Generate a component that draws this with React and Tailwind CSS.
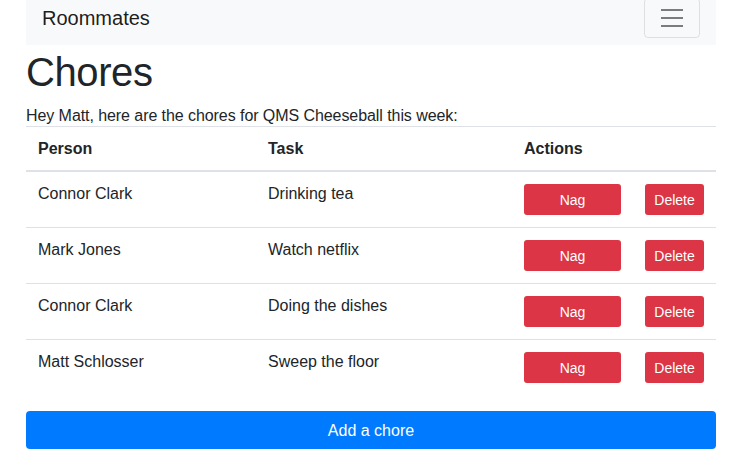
import React from 'react';

const chores = [
    { person: 'Connor Clark', task: 'Drinking tea' },
    { person: 'Mark Jones', task: 'Watch netflix' },
    { person: 'Connor Clark', task: 'Doing the dishes' },
    { person: 'Matt Schlosser', task: 'Sweep the floor' },
];

const App = () => {
    return (
        <div className="min-h-screen bg-white text-[#212529] font-['Liberation_Sans',Arial,sans-serif] text-[16px] leading-[24px] overflow-hidden">
            <div className="w-[690px] ml-[26px]">
                {/* Navbar */}
                <nav className="-mt-[10px] h-[55px] bg-[#f8f9fa] flex items-center justify-between px-4">
                    <span className="text-[20px] leading-[30px] py-[5px] text-black/90">Roommates</span>
                    <button className="w-[56px] h-[40px] flex items-center justify-center border border-black/10 rounded-[4px]">
                        <svg width="30" height="30" viewBox="0 0 30 30">
                            <path stroke="rgba(0,0,0,0.5)" strokeWidth="2" strokeLinecap="butt" d="M4 7h22M4 15h22M4 23h22" />
                        </svg>
                    </button>
                </nav>

                <h1 className="text-[40px] leading-[48px] font-medium tracking-[-0.4px] pt-[3px] mb-[6px]">Chores</h1>
                <p className="pt-[4px] leading-[20px] tracking-[-0.07px]">Hey Matt, here are the chores for QMS Cheeseball this week:</p>

                {/* Chores table */}
                <table className="w-full border-collapse mb-4 table-fixed">
                    <colgroup>
                        <col className="w-[230px]" />
                        <col className="w-[256px]" />
                        <col className="w-[121px]" />
                        <col className="w-[83px]" />
                    </colgroup>
                    <thead>
                        <tr className="border-t border-[#dee2e6] border-b-2">
                            <th className="p-3 text-left font-bold leading-[19px]">Person</th>
                            <th className="p-3 text-left font-bold leading-[19px]">Task</th>
                            <th className="p-3 text-left font-bold leading-[19px]" colSpan={2}>Actions</th>
                        </tr>
                    </thead>
                    <tbody>
                        {chores.map((c, i) => (
                            <tr key={i} className="border-t border-[#dee2e6] first:border-t-0">
                                <td className="p-3 align-top leading-[19px]">{c.person}</td>
                                <td className="p-3 align-top leading-[19px]">{c.task}</td>
                                <td className="p-3 align-top">
                                    <button className="w-full h-[31px] pt-px bg-[#dc3545] text-white text-[14px] leading-[21px] rounded-[3px]">
                                        Nag
                                    </button>
                                </td>
                                <td className="p-3 align-top">
                                    <button className="w-[59px] h-[31px] pt-px bg-[#dc3545] text-white text-[14px] leading-[21px] rounded-[3px]">
                                        Delete
                                    </button>
                                </td>
                            </tr>
                        ))}
                    </tbody>
                </table>

                <button className="w-full h-[38px] pt-px bg-[#007bff] text-white rounded-[4px] text-[16px]">
                    Add a chore
                </button>
            </div>
        </div>
    );
};

export default App;
